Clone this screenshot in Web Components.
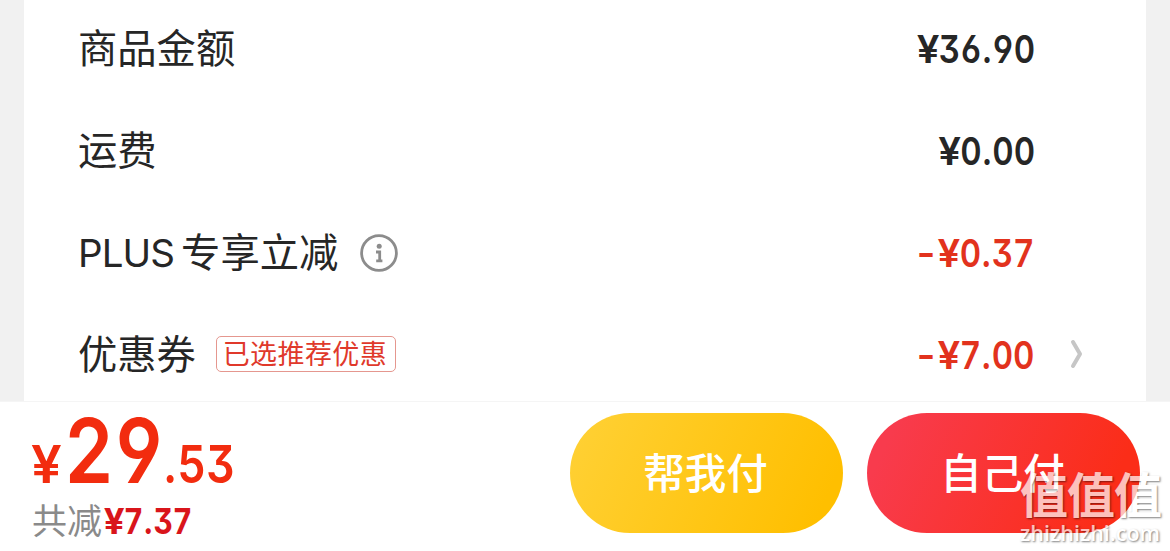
<!DOCTYPE html>
<html lang="zh-CN">
<head>
<meta charset="utf-8">
<title>确认订单</title>
<style>
  body {
    margin: 0;
    background: #f1f1f1;
    font-family: Inter, 'Noto Sans CJK SC', sans-serif;
    color: #262626;
  }
</style>
</head>
<body>
<checkout-page></checkout-page>

<script>
// narrow price figures; the sign and the point get their own widths
class PriceText extends HTMLElement {
  connectedCallback() {
    const figures = this.getAttribute('value')
      .replace(/[-¥]/g, '<span class="sign">$&</span>')
      .replace('.', '<span class="point">.</span>');
    this.attachShadow({ mode: 'open' });
    this.shadowRoot.innerHTML = `
      <style>
        :host {
          display: inline-block;
          font-family: Inter, sans-serif;
          font-weight: 600;
          font-feature-settings: 'ss01' 1, 'cv09' 1, 'tnum' 1;
          font-kerning: none;
          line-height: 1;
          white-space: nowrap;
          transform: scaleX(0.86);
          transform-origin: var(--origin, left) center;
        }
        .sign { display: inline-block; transform: scaleX(1.22); margin: 0 0.045em; }
        .point { font-feature-settings: 'ss01' 1, 'tnum' 0; }
      </style>
      ${figures}
    `;
  }
}

class InfoIcon extends HTMLElement {
  connectedCallback() {
    this.attachShadow({ mode: 'open' });
    this.shadowRoot.innerHTML = `
      <style>
        :host { display: block; width: 38px; height: 38px; margin-left: 22px; }
        svg { display: block; }
      </style>
      <svg width="38" height="38" viewBox="0 0 38 38" fill="none" stroke="#8c8c8c">
        <circle cx="19" cy="19" r="17.4" stroke-width="2.8"/>
        <circle cx="19.2" cy="12.2" r="2.5" fill="#8c8c8c" stroke="none"/>
        <path d="M16 18h3.7v8.8M16.2 26.8h6.2" stroke-width="2.8"/>
      </svg>
    `;
  }
}

class CouponTag extends HTMLElement {
  connectedCallback() {
    this.attachShadow({ mode: 'open' });
    this.shadowRoot.innerHTML = `
      <style>
        :host {
          display: flex;
          align-items: center;
          justify-content: center;
          box-sizing: border-box;
          width: 180px;
          height: 36px;
          margin: -2px 0 0 20px;
          border: 1px solid #e5978f;
          border-radius: 5px;
          color: #e0392b;
          font-size: 27px;
          line-height: 34px;
          letter-spacing: 0.4px;
          padding: 1px 2px 0 0;
        }
      </style>
      <slot></slot>
    `;
  }
}

class FeeRow extends HTMLElement {
  connectedCallback() {
    this.attachShadow({ mode: 'open' });
    this.shadowRoot.innerHTML = `
      <style>
        :host {
          display: flex;
          align-items: center;
          height: 102px;
          padding: 0 111px 0 54px;
          position: relative;
        }
        .label {
          display: flex;
          align-items: center;
          flex: 1;
          font-size: 39.3px;
          line-height: 58px;
        }
        ::slotted(b) {
          font-weight: 400;
          font-size: 38.5px;
          letter-spacing: -0.9px;
          margin-right: 7px;
        }
        price-text { --origin: right; font-size: 38.5px; }
        :host([discount]) price-text { color: #e2321d; }
        .arrow { display: none; position: absolute; right: 61px; top: 34px; }
        :host([link]) .arrow { display: block; }
      </style>
      <div class="label"><slot></slot></div>
      <price-text value="${this.getAttribute('amount')}"></price-text>
      <svg class="arrow" width="16" height="32" viewBox="0 0 16 32" fill="none" stroke="#c6c6c6" stroke-width="4" stroke-linecap="round" stroke-linejoin="round">
        <path d="M4 4l7 12L4 28"/>
      </svg>
    `;
  }
}

class PayButton extends HTMLElement {
  connectedCallback() {
    this.attachShadow({ mode: 'open' });
    this.shadowRoot.innerHTML = `
      <style>
        :host { display: block; }
        button {
          display: block;
          width: 273px;
          height: 120px;
          padding: 0 2px 4px 0;
          border: 0;
          border-radius: 60px;
          background: linear-gradient(115deg, #ffd033 5%, #ffbf00 90%);
          color: #fff;
          font: 500 41.5px/60px 'Noto Sans CJK SC', sans-serif;
        }
        :host([primary]) button {
          background: linear-gradient(115deg, #f83b4d 10%, #fb2d18 85%);
        }
      </style>
      <button><slot></slot></button>
    `;
  }
}

class TotalPrice extends HTMLElement {
  connectedCallback() {
    this.attachShadow({ mode: 'open' });
    this.shadowRoot.innerHTML = `
      <style>
        :host { display: block; flex: 1; }
        .total {
          display: flex;
          align-items: baseline;
          height: 90px;
          color: #f22c0f;
          line-height: 76px;
        }
        .total price-text { font-size: 52px; line-height: 76px; }
        .total .int { font-size: 90px; margin-left: -2px; }
        .total .cents { margin-left: -17px; }
        .saved {
          display: flex;
          align-items: center;
          height: 36px;
          font-size: 35px;
          line-height: 36px;
          color: #8a8a8a;
        }
        .saved price-text { color: #d9151b; font-weight: 700; margin-left: 2px; }
      </style>
      <div class="total">
        <price-text value="¥"></price-text>
        <price-text class="int" value="29"></price-text>
        <price-text class="cents" value=".53"></price-text>
      </div>
      <div class="saved">共减<price-text value="¥7.37"></price-text></div>
    `;
  }
}

class SiteMark extends HTMLElement {
  connectedCallback() {
    this.attachShadow({ mode: 'open' });
    this.shadowRoot.innerHTML = `
      <style>
        :host {
          display: block;
          position: absolute;
          left: 1020px;
          top: 466px;
          width: 146px;
          color: #fff;
          opacity: 0.7;
          text-shadow: 1px 1px 2px rgba(0, 0, 0, 0.7);
          white-space: nowrap;
        }
        .name { font: 700 48px/52px 'Noto Sans CJK SC', sans-serif; letter-spacing: -1px; }
        .url { font: 600 21.5px/26px 'Open Sans', sans-serif; padding-top: 2px; }
      </style>
      <div class="name">值值值</div>
      <div class="url">zhizhizhi.com</div>
    `;
  }
}

class CheckoutPage extends HTMLElement {
  connectedCallback() {
    this.attachShadow({ mode: 'open' });
    this.shadowRoot.innerHTML = `
      <style>
        :host {
          display: flex;
          flex-direction: column;
          position: relative;
          width: 1170px;
          height: 551px;
          overflow: hidden;
        }
        .fees {
          height: 401px;
          margin: 0 24px;
          background: #fff;
          overflow: hidden;
        }
        .fees fee-row:first-child { margin-top: -2px; }
        .bar {
          display: flex;
          align-items: flex-start;
          gap: 24px;
          box-sizing: border-box;
          height: 150px;
          padding: 11px 30px 0 32px;
          border-top: 1px solid #f5f5f5;
          background: #fff;
        }
      </style>
      <div class="fees">
        <fee-row amount="¥36.90">商品金额</fee-row>
        <fee-row amount="¥0.00">运费</fee-row>
        <fee-row amount="-¥0.37" discount><b>PLUS</b>专享立减<info-icon></info-icon></fee-row>
        <fee-row amount="-¥7.00" discount link>优惠券<coupon-tag>已选推荐优惠</coupon-tag></fee-row>
      </div>
      <div class="bar">
        <total-price></total-price>
        <pay-button>帮我付</pay-button>
        <pay-button primary>自己付</pay-button>
      </div>
      <site-mark></site-mark>
    `;
  }
}

customElements.define('price-text', PriceText);
customElements.define('info-icon', InfoIcon);
customElements.define('coupon-tag', CouponTag);
customElements.define('fee-row', FeeRow);
customElements.define('pay-button', PayButton);
customElements.define('total-price', TotalPrice);
customElements.define('site-mark', SiteMark);
customElements.define('checkout-page', CheckoutPage);
</script>
</body>
</html>
